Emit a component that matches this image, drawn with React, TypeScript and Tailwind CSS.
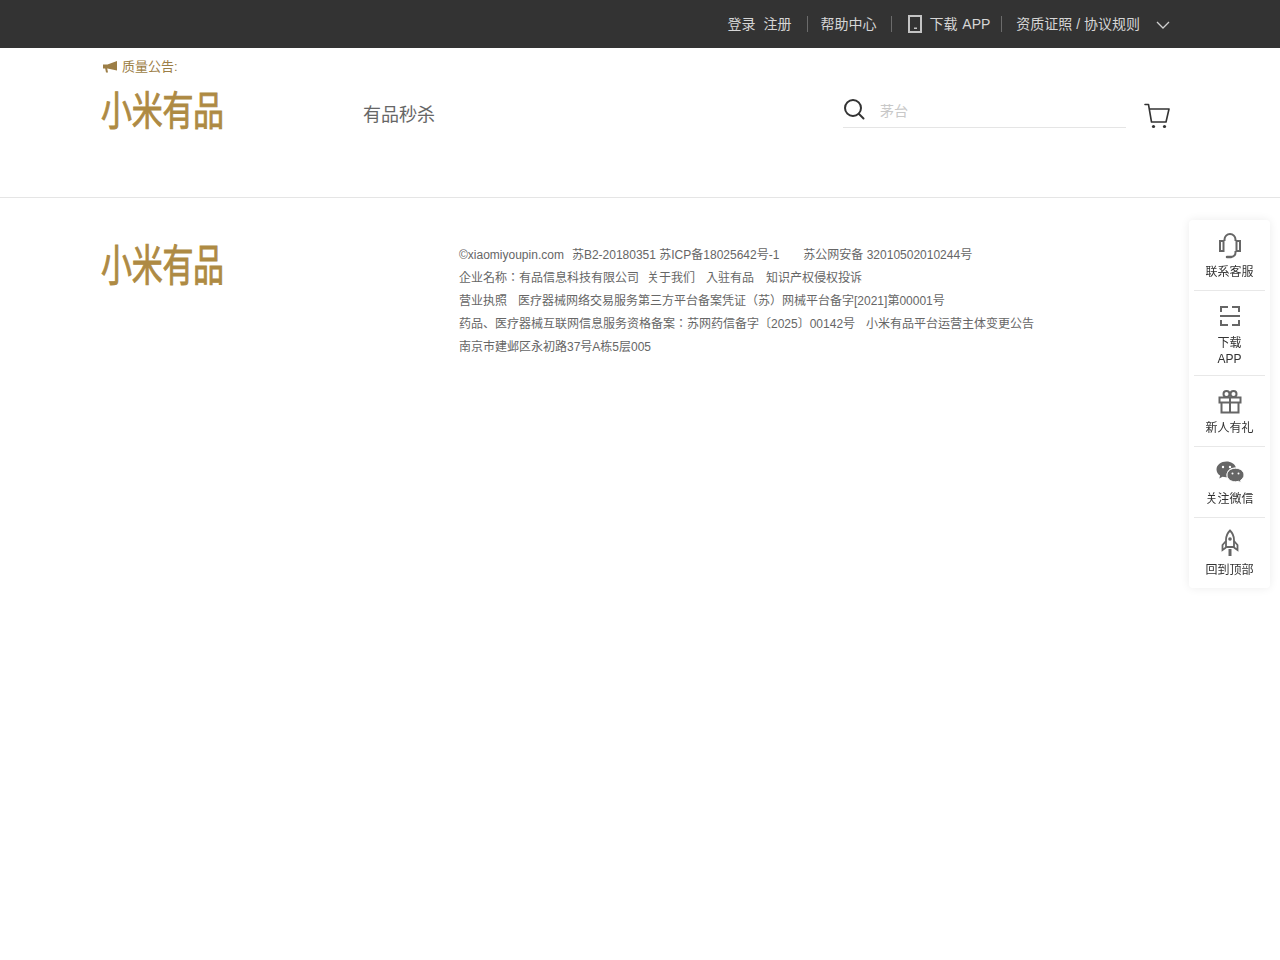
import React from "react";

const font = "font-['Liberation_Sans','Noto_Sans_CJK_JP',sans-serif]";

function Logo({ stretch }: { stretch: string }) {
  return (
    <div className="w-[122px] h-[44px] pl-px flex items-center overflow-visible">
      <span className={`block text-[31px] leading-[44px] tracking-[-0.3px] whitespace-nowrap font-normal [-webkit-text-stroke:0.7px_#ae8a43] text-[#ae8a43] origin-center font-['Noto_Sans_CJK_SC',sans-serif] ${stretch}`}>
        小米有品
      </span>
    </div>
  );
}

function Sep() {
  return <span className="block w-px h-4 bg-[#6b6b6b]" />;
}

function SideItem({ icon, label, h, gap, last }: { icon: React.ReactNode; label: React.ReactNode; h: string; gap: string; last?: boolean }) {
  return (
    <div className={`mx-[5px] flex flex-col items-center ${h} ${last ? "" : "border-b border-[#e8e8e8]"}`}>
      {icon}
      <div className={`text-xs leading-[16px] ${gap} text-[#333] text-center`}>{label}</div>
    </div>
  );
}

export default function App() {
  return (
    <div className={`${font} min-h-[960px] bg-white relative`}>
      <div className="h-12 bg-[#333333]">
        <div className="w-[1080px] mx-auto flex justify-end items-center h-12 text-sm text-[#d6d6d6] pr-[10px]">
          <span>登录</span>
          <span className="ml-2">注册</span>
          <span className="ml-[16px]"><Sep /></span>
          <span className="ml-[12px]">帮助中心</span>
          <span className="ml-[15px]"><Sep /></span>
          <svg className="ml-[16px]" width="14" height="18" viewBox="0 0 14 18" fill="none">
            <rect x="1" y="1" width="12" height="16" stroke="#c4c4c4" strokeWidth="2" />
            <rect x="6" y="12.500" width="3" height="1.500" fill="#c4c4c4" />
          </svg>
          <span className="ml-[7px] [word-spacing:1px]">下载 APP</span>
          <span className="ml-[11px]"><Sep /></span>
          <span className="ml-[14px]">资质证照 / 协议规则</span>
          <svg className="ml-[16px] mt-[2px]" width="14" height="8" viewBox="0 0 14 8" fill="none">
            <path d="M1 1l6 6 6-6" stroke="#cfcfcf" strokeWidth="1.300" />
          </svg>
        </div>
      </div>

      <header className="h-[150px] border-b border-[#e5e5e5]">
        <div className="w-[1080px] mx-auto h-full pt-[11px]">
          <div className="flex items-center h-4 pl-[3px] text-[13px] text-[#9c7e46]">
            <svg width="14" height="12" viewBox="0 0 14 12" fill="#9c7e46">
              <path d="M0 3.500h4.500L14 0V9.500L4.500 7.500H4.200l.8 4H3L2.200 7.500H0z" />
            </svg>
            <span className="ml-[5px]">质量公告:</span>
          </div>
          <div className="flex mt-[11px]">
            <Logo stretch="scale-y-[1.28]" />
            <div className="ml-[141px] pt-[14px] text-lg leading-[30px] text-[#666]">有品秒杀</div>
            <div className="ml-auto flex items-start pr-[10px]">
              <div className="w-[283px] h-[36px] mt-[6px] border-b border-[#e5e5e5] flex items-center">
                <svg className="-mt-[2px]" width="22" height="22" viewBox="0 0 22 22" fill="none">
                  <circle cx="10" cy="10" r="8" stroke="#333" strokeWidth="2" />
                  <path d="M16 16l4.500 4.500" stroke="#333" strokeWidth="2" strokeLinecap="round" />
                </svg>
                <span className="ml-[15px] mt-[2px] text-sm text-[#c8c8c8]">茅台</span>
              </div>
              <svg className="ml-[18px] mt-[17px]" width="26" height="26" viewBox="0 0 26 26" fill="none">
                <path d="M1 1.500h3.500l3 17.500h14.500l3-13H5.500" stroke="#333" strokeWidth="1.600" strokeLinejoin="round" strokeLinecap="round" />
                <circle cx="9.500" cy="23.500" r="1.600" fill="#333" />
                <circle cx="20.500" cy="23.500" r="1.600" fill="#333" />
              </svg>
            </div>
          </div>
        </div>
      </header>

      <footer className="w-[1080px] mx-auto flex pt-[43px]">
        <Logo stretch="scale-y-[1.4]" />
        <div className="ml-[237px] mt-[3px] text-xs leading-[23px] text-[#666] whitespace-nowrap">
          <div>
            <span>©xiaomiyoupin.com</span>
            <span className="ml-2">苏B2-20180351 苏ICP备18025642号-1</span>
            <span className="ml-6">苏公网安备 32010502010244号</span>
          </div>
          <div>
            <span>企业名称：有品信息科技有限公司</span>
            <span className="ml-2">关于我们</span>
            <span className="ml-[11px]">入驻有品</span>
            <span className="ml-3">知识产权侵权投诉</span>
          </div>
          <div>
            <span>营业执照</span>
            <span className="ml-[11px]">医疗器械网络交易服务第三方平台备案凭证（苏）网械平台备字[2021]第00001号</span>
          </div>
          <div>
            <span>药品、医疗器械互联网信息服务资格备案：苏网药信备字〔2025〕00142号</span>
            <span className="ml-[11px]">小米有品平台运营主体变更公告</span>
          </div>
          <div>南京市建邺区永初路37号A栋5层005</div>
        </div>
      </footer>

      <aside className="fixed left-[1189px] top-[220px] w-[81px] h-[368px] bg-white shadow-[0_0_10px_rgba(0,0,0,0.08)] rounded-sm">
        <SideItem
          h="h-[71px] pt-[12px]"
          gap="mt-[5px]"
          label="联系客服"
          icon={
            <svg width="24" height="27" viewBox="0 0 24 27" fill="none" stroke="#666" strokeWidth="2">
              <rect x="2" y="9" width="3.500" height="10" />
              <rect x="18.500" y="9" width="3.500" height="10" />
              <path d="M6.500 9V7.500a5.500 5.500 0 0111 0V9M17.500 19v1.500q0 4-5 4.500" />
              <path d="M9 25h4" strokeWidth="2.500" strokeLinecap="round" />
            </svg>
          }
        />
        <SideItem
          h="h-[85px] pt-[15px]"
          gap="mt-[9px]"
          label={<>下载<br />APP</>}
          icon={
            <svg width="20" height="20" viewBox="0 0 20 20" fill="none" stroke="#666" strokeWidth="2">
              <path d="M1 6V1h7M12 1h7v5M1 14v5h7M12 19h7v-5" />
              <path d="M0 10h20" />
            </svg>
          }
        />
        <SideItem
          h="h-[71px] pt-[14px]"
          gap="mt-[6px]"
          label="新人有礼"
          icon={
            <svg width="24" height="24" viewBox="0 0 24 24" fill="none" stroke="#666" strokeWidth="2">
              <rect x="1.500" y="7.500" width="21" height="5" />
              <path d="M3.500 12.500v10h17v-10M12 7.500v15" />
              <circle cx="8.500" cy="4" r="3" />
              <circle cx="15.500" cy="4" r="3" />
            </svg>
          }
        />
        <SideItem
          h="h-[71px] pt-[14px]"
          gap="mt-[6px]"
          label="关注微信"
          icon={
            <svg width="28" height="24" viewBox="0 0 28 24" fill="#666">
              <path d="M10.500 0.500C5 0.500 0.500 4 0.500 8.500c0 2.600 1.400 4.600 3.600 6.100l-.8 2.800 3.200-1.700c1.200.3 2.300.5 3.500.5h.9c-.2-.7-.3-1.400-.3-2.100 0-4.300 3.700-7.700 8.400-7.700h.9C18.900 3 15 .5 10.500 .5z" />
              <path d="M28 14c0-3.800-3.700-6.800-8.500-6.800-4.800 0-8.500 3-8.500 6.800s3.700 6.800 8.500 6.800c1 0 2-.2 3-.5l2.700 1.600-.7-2.500c2-1.300 3.500-3.200 3.500-5.400z" stroke="#fff" strokeWidth="1" />
              <circle cx="7" cy="6" r="1.200" fill="#fff" />
              <circle cx="14" cy="6" r="1.200" fill="#fff" />
              <circle cx="16.500" cy="12.500" r="1" fill="#fff" />
              <circle cx="22.500" cy="12.500" r="1" fill="#fff" />
            </svg>
          }
        />
        <SideItem
          h="h-[71px] pt-[11px]"
          gap="mt-[5px]"
          last
          label="回到顶部"
          icon={
            <svg width="18" height="28" viewBox="0 0 18 28" fill="none" stroke="#666" strokeWidth="1.800">
              <path d="M9 1.500c2.800 2.800 4 6 4 9.500v7H5v-7c0-3.500 1.200-6.700 4-9.500z" />
              <circle cx="9" cy="10" r="1.800" fill="#666" stroke="none" />
              <path d="M5 12l-3.500 4v5l3.500-2.500M13 12l3.500 4v5L13 18.500" />
              <path d="M9 20v7" strokeWidth="3" />
            </svg>
          }
        />
      </aside>
    </div>
  );
}
